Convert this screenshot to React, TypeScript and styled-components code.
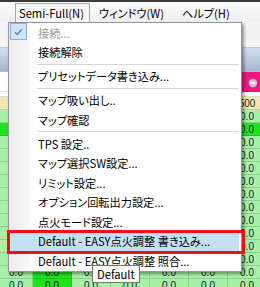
import React from 'react';
import styled, { createGlobalStyle, css } from 'styled-components';

const GlobalStyle = createGlobalStyle`
  html, body { margin: 0; padding: 0; background: #ffffff; }
  #root { width: 260px; height: 287px; }
`;

const uiFont = `"Noto Sans CJK JP", "Noto Sans", sans-serif`;

const Screen = styled.div`
  position: relative;
  width: 260px;
  height: 287px;
  overflow: hidden;
  background: #f0f0f0;
  font-family: ${uiFont};
  font-size: 11.2px;
  font-feature-settings: "palt";
  color: #000;
`;

const MenuBar = styled.div`
  height: 20px;
  border-top: 2px solid #3a3a3a;
  background: linear-gradient(#f9fafb, #eef0f3);
  display: flex;
  align-items: stretch;
  padding-left: 15px;
`;

const MenuTab = styled.div<{ $open?: boolean }>`
  box-sizing: border-box;
  padding: 0 8px;
  display: flex;
  align-items: center;
  border: 1px solid transparent;
  border-bottom: none;
  margin-top: 1px;
  white-space: nowrap;
  ${(p) =>
    p.$open &&
    css`
      padding: 0 5px 0 3px;
      background: #f7f7f7;
      border-color: #a8a8a8;
      position: relative;
      z-index: 3;
    `}
`;

const Toolbar = styled.div`
  height: 25px;
  background: #f4f4f4;
  border-bottom: 1px solid #c9c9c9;
`;

type Tone = 'blue' | 'white' | 'pink' | 'beige' | 'light' | 'bright';

const tones: Record<Tone, string> = {
  blue: 'linear-gradient(#d3deec, #a2b7d2)',
  white: '#ffffff',
  pink: '#f0157f',
  beige: '#f2e6b2',
  light: '#a6f1a6',
  bright: '#1ee31e',
};

const GridRow = styled.div<{ $h: number }>`
  display: grid;
  grid-template-columns: 33px repeat(6, 39px);
  height: ${(p) => p.$h}px;
`;

const Cell = styled.div<{ $tone: Tone }>`
  box-sizing: border-box;
  background: ${(p) => tones[p.$tone]};
  border-right: 1px solid rgba(0, 0, 0, 0.14);
  border-bottom: 1px solid rgba(0, 0, 0, 0.14);
  display: flex;
  align-items: center;
  justify-content: center;
  font: 10px "Liberation Sans", Arial, sans-serif;
  color: #1a1a1a;
  white-space: nowrap;
  overflow: hidden;
  position: relative;
`;

const Dropdown = styled.div`
  position: absolute;
  left: 8px;
  top: 22px;
  width: 234px;
  box-sizing: border-box;
  border: 1px solid #979797;
  background: linear-gradient(to right, #ececec 0, #f8f8f8 20px, #ffffff 24px);
  box-shadow: 2px 2px 3px rgba(0, 0, 0, 0.4);
  padding: 0;
  z-index: 2;
`;

const Item = styled.div<{ $disabled?: boolean; $active?: boolean }>`
  position: relative;
  height: 19.5px;
  display: flex;
  align-items: center;
  margin: 0 2px;
  padding-left: 27px;
  white-space: nowrap;
  color: ${(p) => (p.$disabled ? '#9c9c9c' : '#000')};
  ${(p) =>
    p.$active &&
    css`
      background: #c6def6;
      &::after {
        content: '';
        position: absolute;
        left: -4px;
        right: -6px;
        top: -2px;
        bottom: -3px;
        border: 3px solid #ee1010;
      }
    `}
`;

const CheckBox = styled.span`
  position: absolute;
  left: -1px;
  top: 0;
  width: 17px;
  height: 17px;
  box-sizing: border-box;
  background: #cfe4f8;
  border: 1px solid #7fb3e6;
  display: flex;
  align-items: center;
  justify-content: center;
`;

const Separator = styled.div`
  height: 4.5px;
  display: flex;
  align-items: center;
  margin: 0 2px 0 28px;
  &::before {
    content: '';
    flex: 1;
    height: 1px;
    background: #d7d7d7;
    box-shadow: 0 1px 0 #ffffff;
  }
`;

const Tooltip = styled.div`
  position: absolute;
  left: 92px;
  top: 265px;
  height: 18px;
  box-sizing: border-box;
  padding: 0 4px;
  line-height: 16px;
  background: #fbfbf6;
  border: 1px solid #767676;
  z-index: 4;
  white-space: nowrap;
`;

const PinkMark = styled.svg`
  position: absolute;
  right: 8px;
  top: 6px;
`;

type MenuEntry =
  | { kind: 'sep' }
  | { kind: 'item'; label: string; disabled?: boolean; checked?: boolean; active?: boolean };

const entries: MenuEntry[] = [
  { kind: 'item', label: '接続...', disabled: true, checked: true },
  { kind: 'item', label: '接続解除' },
  { kind: 'sep' },
  { kind: 'item', label: 'プリセットデータ書き込み...' },
  { kind: 'sep' },
  { kind: 'item', label: 'マップ吸い出し..' },
  { kind: 'item', label: 'マップ確認' },
  { kind: 'sep' },
  { kind: 'item', label: 'TPS 設定..' },
  { kind: 'item', label: 'マップ選択SW設定...' },
  { kind: 'item', label: 'リミット設定...' },
  { kind: 'item', label: 'オプション回転出力設定...' },
  { kind: 'item', label: '点火モード設定...' },
  { kind: 'item', label: 'Default - EASY点火調整 書き込み...', active: true },
  { kind: 'item', label: 'Default - EASY点火調整 照合...' },
];

type RowSpec = { h: number; tones: Tone[]; text?: string };

const all = (t: Tone): Tone[] => Array(7).fill(t);

const rows: RowSpec[] = [
  { h: 24, tones: all('blue') },
  { h: 20, tones: ['white', 'white', 'white', 'white', 'white', 'white', 'pink'] },
  { h: 5, tones: all('white') },
  { h: 13, tones: all('beige'), text: '500' },
  { h: 13, tones: all('light'), text: '0.0' },
  { h: 13, tones: all('bright'), text: '0.0' },
  ...Array.from({ length: 12 }, () => ({
    h: 13,
    tones: ['light', 'bright', 'light', 'light', 'light', 'light', 'light'] as Tone[],
    text: '0.0',
  })),
];

export default function App() {
  return (
    <>
      <GlobalStyle />
      <Screen>
        <MenuBar>
          <MenuTab $open>Semi-Full(N)</MenuTab>
          <MenuTab>ウィンドウ(W)</MenuTab>
          <MenuTab>ヘルプ(H)</MenuTab>
        </MenuBar>
        <Toolbar />
        {rows.map((r, ri) => (
          <GridRow key={ri} $h={r.h}>
            {r.tones.map((t, ci) => (
              <Cell key={ci} $tone={t}>
                {r.text}
                {t === 'pink' && (
                  <PinkMark width="10" height="10" viewBox="0 0 10 10">
                    <circle cx="5" cy="5" r="4.2" fill="#c9c3d6" />
                    <path d="M2.6 5h4.8" stroke="#ffffff" strokeWidth="1.4" />
                  </PinkMark>
                )}
              </Cell>
            ))}
          </GridRow>
        ))}
        <Dropdown>
          {entries.map((e, i) =>
            e.kind === 'sep' ? (
              <Separator key={i} />
            ) : (
              <Item key={i} $disabled={e.disabled} $active={e.active}>
                {e.checked && (
                  <CheckBox>
                    <svg width="9" height="8" viewBox="0 0 9 8">
                      <path d="M1 4.2l2.3 2.3L8 1.2" fill="none" stroke="#5d7fa5" strokeWidth="1.3" />
                    </svg>
                  </CheckBox>
                )}
                {e.label}
              </Item>
            )
          )}
        </Dropdown>
        <Tooltip>Default</Tooltip>
      </Screen>
    </>
  );
}
